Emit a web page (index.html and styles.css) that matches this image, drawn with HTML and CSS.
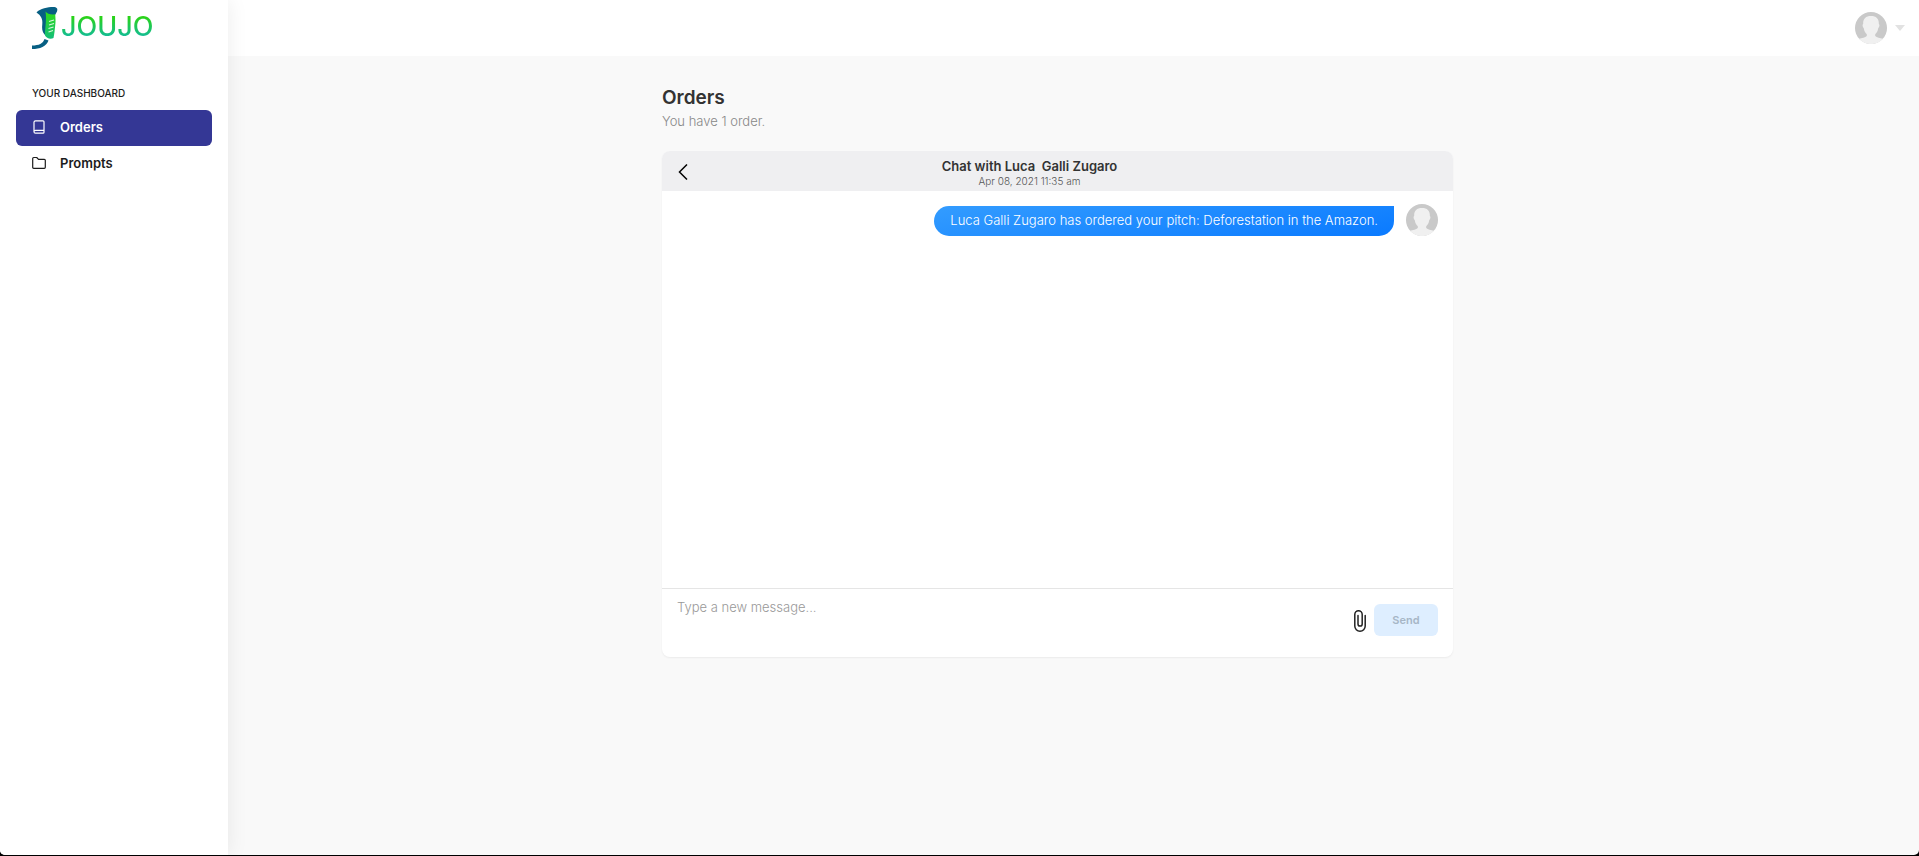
FILE: index.html
```html
<!DOCTYPE html>
<html lang="en">
<head>
  <meta charset="utf-8">
  <title>Joujo - Orders</title>
  <link rel="stylesheet" href="styles.css">
</head>
<body>
  <svg class="symbols" aria-hidden="true">
    <symbol id="avatar" viewBox="0 0 32 32">
      <circle cx="16" cy="16" r="16" fill="#c9c9c9"/>
      <path d="M16 4C10.500 4 7.900 7 8.200 12c-1 .2-.8 3.200.6 4.200.4 2.800 1.400 4.600 3 6V24c-1.500 1.800-4.800 2-7.800 2.700A16 16 0 0 0 28 26.700c-3-.7-6.300-.9-7.800-2.700v-1.800c1.600-1.400 2.600-3.200 3-6 1.400-1 1.600-4 .6-4.200C24.100 7 21.500 4 16 4z" fill="#f0f0f0"/>
    </symbol>
  </svg>

  <div class="app">
    <aside class="sidebar">
      <a class="logo" href="#">
        <svg class="logo-mark" width="28" height="42" viewBox="0 0 28 42" aria-hidden="true">
          <defs>
            <linearGradient id="shoe" x1="0" y1="0" x2="0" y2="1">
              <stop offset="0" stop-color="#2fdc18"/>
              <stop offset="1" stop-color="#12bd78"/>
            </linearGradient>
          </defs>
          <path d="M4.500 5.500C8 1.500 16 0 21 0c4 0 5 1.500 4 4.500L22.500 9 14 7l1.500 22-3-1.500c-2.500-3-2.700-6-2.200-10.500C10.800 12 9 8.500 4.500 5.500z" fill="#075f83"/>
          <path d="M0 38.500c7 0 11-2 12.500-6.500l4 1.500C14.500 39.500 8 42 0 42z" fill="#075f83"/>
          <path d="M13.500 4.500c2 2.500 5 3.500 9.700 2.800.3 4.200.6 7.200 0 11.200-.6 5-.7 8-1.700 12.500-3 1.500-7 .5-8.500-2.500C12.500 24 15 13 13.500 4.500z" fill="url(#shoe)"/>
          <path d="M17 14.500l5-1.500M17 18l5-1.500M16.500 21.500l5-1.500M16.500 25l4.500-1.500" stroke="#d8f8dc" stroke-width="1.200"/>
        </svg>
        <span class="logo-text">JOUJO</span>
      </a>

      <div class="nav-title">YOUR DASHBOARD</div>
      <nav class="nav">
        <a class="nav-item active" href="#">
          <svg width="14" height="14" viewBox="0 0 14 14" fill="none" stroke="currentColor" stroke-width="1.200" aria-hidden="true">
            <path d="M12 10.300V1.800C12 1.200 11.600.8 11 .8H3.500C2.500.8 2 1.300 2 2.200v9.500c0 .9.600 1.500 1.500 1.500H11c.6 0 1-.4 1-1v-1.900M2 11.500c0-.7.600-1.200 1.500-1.200H12"/>
          </svg>
          Orders
        </a>
        <a class="nav-item" href="#">
          <svg width="14" height="14" viewBox="0 0 14 14" fill="none" stroke="currentColor" stroke-width="1.200" stroke-linejoin="round" aria-hidden="true">
            <path d="M.7 2.500c0-.6.400-1 1-1h3l1.800 1.800h5.800c.6 0 1 .4 1 1v7c0 .6-.4 1-1 1H1.700c-.6 0-1-.4-1-1z"/>
          </svg>
          Prompts
        </a>
      </nav>
    </aside>

    <div class="page">
      <header class="topbar">
        <button class="user-menu" type="button" aria-label="Account menu">
          <svg class="avatar" aria-hidden="true"><use href="#avatar"/></svg>
          <span class="caret"></span>
        </button>
      </header>

      <main class="content">
        <div class="orders">
          <h1>Orders</h1>
          <p class="summary">You have 1 order.</p>

          <section class="chat">
            <div class="chat-header">
              <button class="back" type="button" aria-label="Back">
                <svg width="10" height="16" viewBox="0 0 10 16" fill="none" stroke="#000" stroke-width="1.500" aria-hidden="true">
                  <path d="M9 .5L1.500 8 9 15.500"/>
                </svg>
              </button>
              <div class="chat-title">
                <h2>Chat with Luca&nbsp; Galli Zugaro</h2>
                <time>Apr 08, 2021 11:35 am</time>
              </div>
            </div>

            <div class="messages">
              <div class="message">
                <div class="bubble">Luca Galli Zugaro has ordered your pitch: Deforestation in the Amazon.</div>
                <svg class="avatar" aria-hidden="true"><use href="#avatar"/></svg>
              </div>
            </div>

            <form class="composer">
              <textarea aria-label="Message" placeholder="Type a new message..."></textarea>
              <button class="attach" type="button" aria-label="Attach a file">
                <svg width="12" height="22" viewBox="0 0 12 22" fill="none" stroke="#222" stroke-width="1.500" stroke-linecap="round" aria-hidden="true">
                  <path d="M11.200 5.500V16a5.200 5.200 0 0 1-10.400 0V4.500a3.700 3.700 0 0 1 7.400 0V14a2.100 2.100 0 0 1-4.200 0V5.500"/>
                </svg>
              </button>
              <button class="send" type="submit" disabled>Send</button>
            </form>
          </section>
        </div>
      </main>
    </div>
  </div>
</body>
</html>
```
FILE: styles.css
```css
* {
  box-sizing: border-box;
}

body {
  margin: 0;
  background: #000;
  color: #1c1c1c;
  font-family: Inter, "Liberation Sans", sans-serif;
  font-size: 13px;
}

h1, h2, p {
  margin: 0;
}

a {
  color: inherit;
  text-decoration: none;
}

button {
  padding: 0;
  border: none;
  background: none;
  font-family: inherit;
}

.symbols {
  display: none;
}

.app {
  display: flex;
  min-height: calc(100vh - 1px);
  background: #f9f9f9;
  border-radius: 0 0 5px 5px;
  overflow: hidden;
}

/* Sidebar */
.sidebar {
  flex: 0 0 228px;
  padding: 7px 16px;
  background: #fff;
  box-shadow: 0 0 20px rgba(0, 0, 0, 0.08);
  z-index: 1;
}

.logo {
  display: flex;
  align-items: flex-start;
  gap: 1px;
  height: 42px;
  padding-left: 16px;
}

.logo-text {
  padding-top: 4px;
  font-size: 27px;
  line-height: 32px;
  font-weight: 500;
  color: transparent;
  background: linear-gradient(#2bd411 25%, #13bd92 80%);
  background-clip: text;
  -webkit-background-clip: text;
}

.nav-title {
  margin: 36px 0 9px;
  padding-left: 16px;
  font-size: 10px;
  line-height: 16px;
  font-weight: 500;
}

.nav-item {
  display: flex;
  align-items: center;
  gap: 14px;
  height: 36px;
  padding: 0 16px 2px;
  border-radius: 6px;
  font-weight: 600;
}

.nav-item.active {
  background: #343795;
  color: #fff;
}

/* Page */
.page {
  flex: 1;
}

.topbar {
  display: flex;
  justify-content: flex-end;
  align-items: center;
  height: 56px;
  padding-right: 14px;
  background: #fff;
}

.user-menu {
  display: flex;
  align-items: center;
  gap: 8px;
}

.avatar {
  flex: none;
  width: 32px;
  height: 32px;
}

.caret {
  border: 5px solid transparent;
  border-top: 6px solid #e2e2e2;
  border-bottom: none;
}

.content {
  padding: 29px 32px 28px 0;
}

.orders {
  max-width: 791px;
  margin: 0 auto;
}

h1 {
  color: #333;
  font-size: 19px;
  line-height: 26px;
  font-weight: 600;
}

.summary {
  margin: 1px 0 20px;
  color: #888;
  line-height: 19px;
  font-weight: 300;
}

/* Chat */
.chat {
  background: #fff;
  border-radius: 8px;
  box-shadow: 0 1px 2px rgba(0, 0, 0, 0.06);
  overflow: hidden;
}

.chat-header {
  display: grid;
  grid-template-columns: 40px 1fr 96px;
  align-items: center;
  height: 40px;
  background: #efeff1;
}

.back {
  display: flex;
  justify-content: center;
  padding: 2px 0 0 2px;
}

.chat-title {
  padding-top: 4px;
  text-align: center;
}

h2 {
  color: #333;
  font-size: 13px;
  line-height: 16px;
  font-weight: 600;
}

time {
  display: block;
  color: #555;
  font-size: 10px;
  line-height: 14px;
  font-weight: 300;
}

.messages {
  height: 397px;
  padding: 13px 15px;
}

.message {
  display: flex;
  justify-content: flex-end;
  gap: 12px;
}

.bubble {
  height: 30px;
  margin-top: 2px;
  padding: 0 16px;
  border-radius: 15px 0 15px 15px;
  background: linear-gradient(170deg, #339cff, #0a7aff);
  color: #fff;
  line-height: 29px;
  font-weight: 300;
}

.composer {
  display: flex;
  align-items: flex-start;
  gap: 8px;
  padding: 8px 15px 0;
  border-top: 1px solid #e5e5e5;
}

textarea {
  flex: 1;
  height: 60px;
  padding: 0;
  border: none;
  outline: none;
  resize: none;
  font: 300 13px/20px Inter, "Liberation Sans", sans-serif;
}

textarea::placeholder {
  color: #999;
}

.attach {
  display: flex;
  padding-top: 13px;
}

.send {
  width: 64px;
  height: 32px;
  margin-top: 7px;
  border-radius: 6px;
  background: #deeeff;
  color: #a7b6c6;
  font-size: 11px;
  font-weight: 600;
}
```
